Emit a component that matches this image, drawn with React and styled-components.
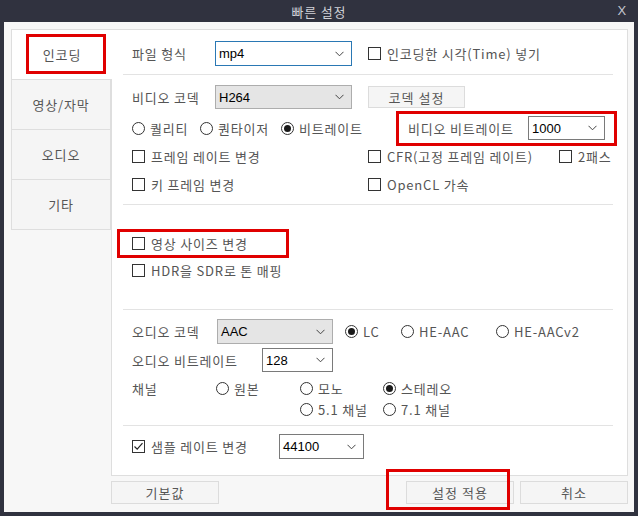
import React from "react";
import styled, { createGlobalStyle } from "styled-components";

const GlobalStyle = createGlobalStyle`
  html, body { margin: 0; padding: 0; background: #30323f; }
  body { font-family: "Noto Sans CJK KR", "Noto Sans", sans-serif; }
  * { box-sizing: border-box; }
`;

const Window = styled.div`
  position: relative;
  width: 638px;
  height: 516px;
  background: #30323f;
  display: flex;
  flex-direction: column;
  overflow: hidden;
`;

const TitleBar = styled.div`
  height: 22px;
  display: flex;
  align-items: center;
  justify-content: center;
  position: relative;
  color: #cfd0d6;
  font-size: 13px;
  letter-spacing: 0.8px;
`;

const CloseX = styled.span`
  position: absolute;
  right: 11px;
  top: 3px;
  font-family: "Liberation Sans", sans-serif;
  font-size: 13px;
  color: #c4c6d0;
`;

const Body = styled.div`
  flex: 1;
  margin: 0 4px 4px 4px;
  background: #f7f7f7;
  padding: 7px 6px 0 7px;
  display: flex;
  flex-direction: column;
`;

const Main = styled.div`
  display: flex;
  height: 447px;
`;

const TabList = styled.div`
  width: 100px;
  display: flex;
  flex-direction: column;
`;

const Tab = styled.div`
  height: 51px;
  margin-top: ${(p) => (p.$first ? 0 : -1)}px;
  margin-right: ${(p) => (p.$active ? -1 : 0)}px;
  border: 1px solid #dedede;
  border-right: ${(p) => (p.$active ? "none" : "1px solid #dedede")};
  background: ${(p) => (p.$active ? "#ffffff" : "#f5f5f5")};
  display: flex;
  align-items: center;
  justify-content: center;
  color: #555;
  font-size: 13px;
  letter-spacing: 0.8px;
  position: relative;
  z-index: ${(p) => (p.$active ? 2 : 1)};
`;

const Panel = styled.div`
  flex: 1;
  background: #fff;
  border: 1px solid #dedede;
  display: flex;
  flex-direction: column;
`;

const Section = styled.div`
  height: ${(p) => p.$h}px;
  display: flex;
  flex-direction: column;
`;

const Separator = styled.div`
  height: 1px;
  margin: 0 14px 0 11px;
  background: #e3e3e3;
  flex: none;
`;

const Row = styled.div`
  height: ${(p) => p.$h || 24}px;
  margin-top: ${(p) => p.$mt || 0}px;
  padding-left: 20px;
  display: flex;
  align-items: center;
  flex: none;
`;

const Label = styled.div`
  width: ${(p) => (p.$w ? `${p.$w}px` : "auto")};
  flex: none;
  color: #555;
  font-size: 13px;
  letter-spacing: 0.8px;
  white-space: nowrap;
`;

const selectVariants = {
  focus: { bg: "#ffffff", border: "#2a78b4" },
  gray: { bg: "#e5e5e5", border: "#adadad" },
  plain: { bg: "#ffffff", border: "#7a7a7a" },
};

const SelectBox = styled.div`
  width: ${(p) => p.$w}px;
  height: ${(p) => p.$h || 25}px;
  flex: none;
  border: 1px solid ${(p) => selectVariants[p.$v].border};
  background: ${(p) => selectVariants[p.$v].bg};
  display: flex;
  align-items: center;
  justify-content: space-between;
  padding: 0 7px 0 3px;
  color: #000;
  font-size: 13px;
  font-family: "Liberation Sans", "Noto Sans CJK KR", sans-serif;
`;

const Chevron = () => (
  <svg width="9" height="6" viewBox="0 0 9 6">
    <polyline points="0.5,0.8 4.5,4.8 8.5,0.8" fill="none" stroke="#444" strokeWidth="1" />
  </svg>
);

const Select = ({ w, v, h, children }) => (
  <SelectBox $w={w} $v={v} $h={h}>
    <span>{children}</span>
    <Chevron />
  </SelectBox>
);

const Item = styled.div`
  width: ${(p) => (p.$w ? `${p.$w}px` : "auto")};
  margin-left: ${(p) => p.$ml || 0}px;
  flex: none;
  display: flex;
  align-items: center;
  gap: ${(p) => p.$gap}px;
  color: #555;
  font-size: 13px;
  letter-spacing: 0.8px;
  white-space: nowrap;
`;

const Box = styled.span`
  width: 13px;
  height: 13px;
  border: 1px solid #333;
  background: #fff;
  display: inline-flex;
  align-items: center;
  justify-content: center;
  flex: none;
`;

const Circle = styled.span`
  width: 13px;
  height: 13px;
  border: 1px solid #333;
  border-radius: 50%;
  background: #fff;
  display: inline-flex;
  align-items: center;
  justify-content: center;
  flex: none;
  &::after {
    content: "";
    width: 7px;
    height: 7px;
    border-radius: 50%;
    background: ${(p) => (p.$on ? "#1a1a1a" : "transparent")};
  }
`;

const Check = ({ w, ml, on, children }) => (
  <Item $w={w} $ml={ml} $gap={6}>
    <Box>
      {on && (
        <svg width="11" height="11" viewBox="0 0 11 11">
          <polyline points="1.5,5.5 4.2,8.2 9.5,2.2" fill="none" stroke="#222" strokeWidth="1.2" />
        </svg>
      )}
    </Box>
    <span>{children}</span>
  </Item>
);

const Radio = ({ w, ml, on, children }) => (
  <Item $w={w} $ml={ml} $gap={5}>
    <Circle $on={on} />
    <span>{children}</span>
  </Item>
);

const PlainButton = styled.div`
  width: ${(p) => p.$w}px;
  height: ${(p) => p.$h}px;
  margin-left: ${(p) => p.$ml || 0}px;
  flex: none;
  background: #f5f5f5;
  border: 1px solid #dcdcdc;
  color: #555;
  font-size: 13px;
  display: flex;
  align-items: center;
  justify-content: center;
  letter-spacing: 1px;
`;

const Footer = styled.div`
  display: flex;
  margin-top: 5px;
`;

const Highlight = styled.div`
  position: absolute;
  left: ${(p) => p.$x}px;
  top: ${(p) => p.$y}px;
  width: ${(p) => p.$w}px;
  height: ${(p) => p.$h}px;
  border: 3px solid #e00000;
  pointer-events: none;
  z-index: 10;
`;

export default function App() {
  return (
    <>
      <GlobalStyle />
      <Window>
        <TitleBar>
          빠른 설정
          <CloseX>X</CloseX>
        </TitleBar>
        <Body>
          <Main>
            <TabList>
              <Tab $active $first>인코딩</Tab>
              <Tab>영상/자막</Tab>
              <Tab>오디오</Tab>
              <Tab>기타</Tab>
            </TabList>
            <Panel>
              <Section $h={44}>
                <Row $mt={11} $h={25}>
                  <Label $w={83}>파일 형식</Label>
                  <Select w={137} v="focus">mp4</Select>
                  <Check ml={16}>인코딩한 시각(Time) 넣기</Check>
                </Row>
              </Section>
              <Separator />
              <Section $h={129}>
                <Row $mt={10} $h={24}>
                  <Label $w={83}>비디오 코덱</Label>
                  <Select w={137} v="gray" h={24}>H264</Select>
                  <PlainButton $w={97} $h={22} $ml={16}>코덱 설정</PlainButton>
                </Row>
                <Row $mt={7} $h={24}>
                  <Radio w={68}>퀄리티</Radio>
                  <Radio w={81}>퀀타이저</Radio>
                  <Radio w={127} on>비트레이트</Radio>
                  <Label $w={120}>비디오 비트레이트</Label>
                  <Select w={77} v="plain" h={24}>1000</Select>
                </Row>
                <Row $mt={4} $h={24}>
                  <Check w={236}>프레임 레이트 변경</Check>
                  <Check w={191}>CFR(고정 프레임 레이트)</Check>
                  <Check>2패스</Check>
                </Row>
                <Row $mt={4} $h={24}>
                  <Check w={236}>키 프레임 변경</Check>
                  <Check>OpenCL 가속</Check>
                </Row>
              </Section>
              <Separator />
              <Section $h={104}>
                <Row $mt={26} $h={24}>
                  <Check>영상 사이즈 변경</Check>
                </Row>
                <Row $mt={3} $h={24}>
                  <Check>HDR을 SDR로 톤 매핑</Check>
                </Row>
              </Section>
              <Separator />
              <Section $h={115}>
                <Row $mt={9} $h={25}>
                  <Label $w={85}>오디오 코덱</Label>
                  <Select w={116} v="gray">AAC</Select>
                  <Radio ml={12} w={56} on>LC</Radio>
                  <Radio w={95}>HE-AAC</Radio>
                  <Radio>HE-AACv2</Radio>
                </Row>
                <Row $mt={4} $h={24}>
                  <Label $w={130}>오디오 비트레이트</Label>
                  <Select w={71} v="plain" h={24}>128</Select>
                </Row>
                <Row $mt={5} $h={22}>
                  <Label $w={84}>채널</Label>
                  <Radio w={84}>원본</Radio>
                  <Radio w={83}>모노</Radio>
                  <Radio on>스테레오</Radio>
                </Row>
                <Row $h={20}>
                  <Radio ml={168} w={83}>5.1 채널</Radio>
                  <Radio>7.1 채널</Radio>
                </Row>
              </Section>
              <Separator />
              <Section $h={49}>
                <Row $mt={8} $h={25}>
                  <Check w={147} on>샘플 레이트 변경</Check>
                  <Select w={85} v="plain">44100</Select>
                </Row>
              </Section>
            </Panel>
          </Main>
          <Footer>
            <PlainButton $w={108} $h={23} $ml={100}>기본값</PlainButton>
            <PlainButton $w={108} $h={23} $ml={187}>설정 적용</PlainButton>
            <PlainButton $w={108} $h={23} $ml={6}>취소</PlainButton>
          </Footer>
        </Body>
        <Highlight $x={26} $y={34} $w={80} $h={40} />
        <Highlight $x={396} $y={111} $w={221} $h={35} />
        <Highlight $x={117} $y={229} $w={172} $h={29} />
        <Highlight $x={386} $y={469} $w={124} $h={41} />
      </Window>
    </>
  );
}
